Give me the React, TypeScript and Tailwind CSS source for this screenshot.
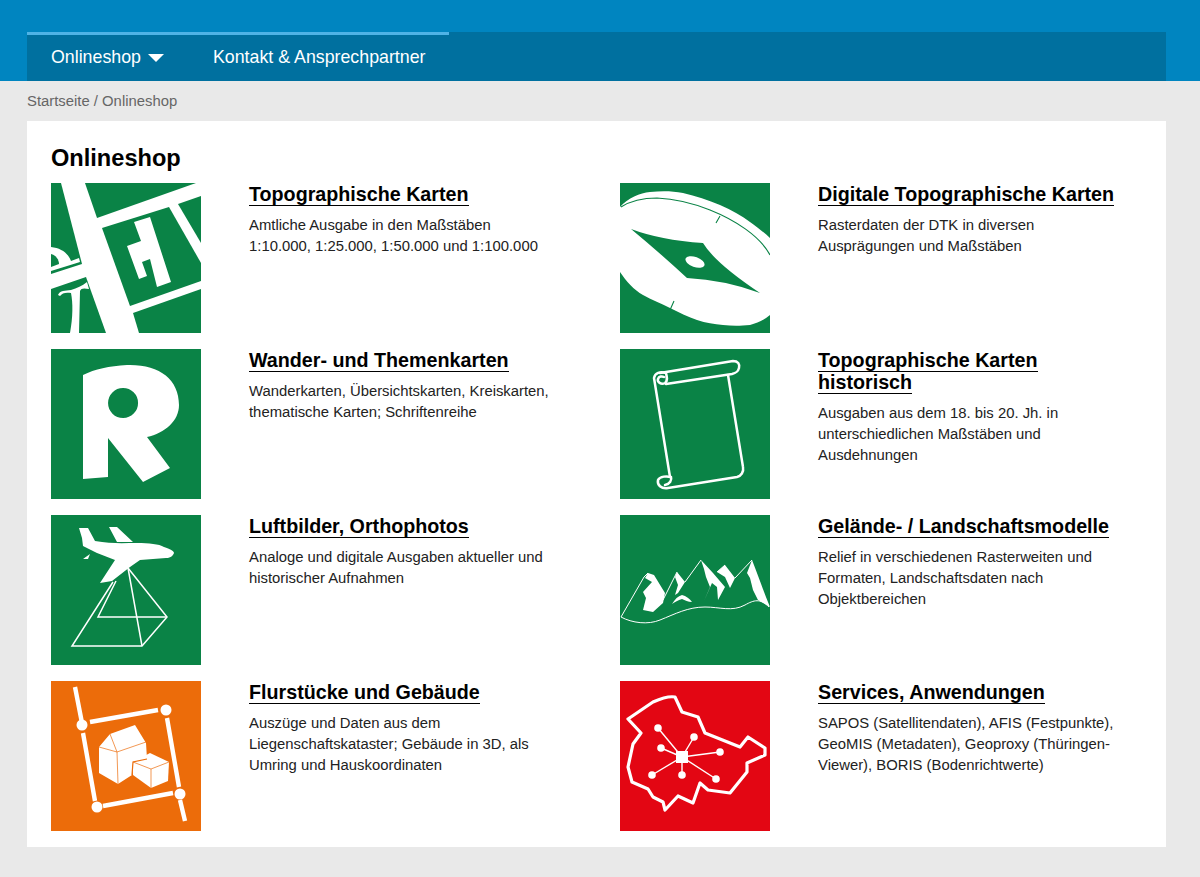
import React from "react";

const G = "#0a8346";

function IconMap() {
  return (
    <svg viewBox="0 0 150 150" className="block h-[150px] w-[150px] bg-white">
      <g fill={G}>
        <polygon points="34,0 145,0 46,35" />
        <polygon points="51,45 118,24 150,80 150,98 79,123" />
        <polygon points="127,21 150,13 150,60" />
        <polygon points="82,130 150,106 150,150 88,150" />
        <polygon points="0,106 35,94 55,150 0,150" />
        <polygon points="0,0 10,0 31,81 0,91" />
      </g>
      <polygon fill="#fff" points="83,39 99,34 120,99 106,104 99,76 91,79 96,93 88,96 76,63 90,58" />
      <path fill="#fff" d="M0 64 C10 65 17 70 20 78 L28 75 L29 79 L0 88 Z" />
      <path fill={G} d="M0 71 C5 72 8 77 8 81 L0 84 Z" />
      <path fill="#fff" d="M7 112 C9 107 14 108 20 107 C26 105 31 103 36 99 L38 106 C33 105 30 105 29 108 L28 150 L19 150 C22 134 22 120 20 110 C15 109 11 110 9 113 Z" />
    </svg>
  );
}

function IconR() {
  return (
    <svg viewBox="0 0 150 150" className="block h-[150px] w-[150px]">
      <rect width="150" height="150" fill={G} />
      <path fillRule="evenodd" fill="#fff" d="M32 26 C44 20 58 17 76 16 C108 15 128 30 128 56 C128 72 114 84 96 88 L119 119 L92 133 L57 89 L57 128 L32 130 Z M72 39 A15 15 0 1 0 72.1 69 A15 15 0 1 0 72 39 Z" />
    </svg>
  );
}

function IconPlane() {
  return (
    <svg viewBox="0 0 150 150" className="block h-[150px] w-[150px]">
      <rect width="150" height="150" fill={G} />
      <path fill="#fff" d="M28 13 L37 13 L44 26 C60 29 74 28 86 28 C98 28 108 29 113 32 C119 34 123 36 123 38 C122 41 119 43 115 43 L89 45 L79 52 L61 66 L49 68 L64 45 L46 38 L32 31 L31 23 Z" />
      <path fill="#fff" d="M58 12 L66 12 L82 27 L66 27 Z M32 44 L39 39 L37 44 Z" />
      <g fill="none" stroke="#fff" strokeWidth="1.5">
        <path d="M77 53 L116 102 L91 131 L21 131 L62 67" />
        <path d="M77 53 L91 131 M65 66 L47 102 L116 102" />
      </g>
    </svg>
  );
}

function IconHouse() {
  return (
    <svg viewBox="0 0 150 150" className="block h-[150px] w-[150px]">
      <rect width="150" height="150" fill="#ec6c0a" />
      <g stroke="#fff" strokeWidth="4.4" fill="none">
        <path d="M24 6 L31 42 M32 52 L44 120 M52 125 L122 112 M129 119 L134 140 M128 106 L116 37 M107 29 L39 41" />
      </g>
      <g fill="#fff">
        <circle cx="31" cy="44" r="5.5" />
        <circle cx="46" cy="126" r="5.5" />
        <circle cx="129" cy="113" r="5.5" />
        <circle cx="115" cy="29" r="5.5" />
        <path d="M48 66 L59 53 L84 44 L95 62 L96 78 L82 82 L81 94 L67 103 L48 92 Z" />
        <path d="M82 81 L99 72 L118 81 L117 100 L100 107 L82 94 Z" />
      </g>
      <g fill="none" stroke="#ec6c0a" strokeWidth="0.7">
        <path d="M48 66 L66 71 L95 61 M59 53 L66 71 L67 103" />
        <path d="M82 81 L100 88 L118 81 M100 88 L100 107" />
        <path d="M96 78 L82 81 L81 94" strokeWidth="1.2" />
      </g>
    </svg>
  );
}

function IconCompass() {
  return (
    <svg viewBox="0 0 150 150" className="block h-[150px] w-[150px]">
      <rect width="150" height="150" fill={G} />
      <path fill="#fff" d="M0 24 C8 15 20 10 30 9 C42 8 52 8 63 10 C76 13 88 17 100 22 C112 27 122 33 130 39 C138 45 145 50 150 55 L150 132 C144 137 138 140 130 142 C120 143 112 143 103 142 C94 141 86 140 77 137 C68 134 60 130 50 125 C40 120 32 117 23 112 C14 107 6 98 0 89 Z" />
      <path fill="none" stroke={G} strokeWidth="1.1" d="M1 24 C12 17 26 15 37 15 C58 16 75 21 90 27 C115 37 140 53 150 72 M100 33 L96 40 M54 118 L50 127" />
      <path fill={G} d="M11 46 Q40 57 83 60 Q95 80 140 110 Q105 97 67 95 Q40 70 11 46 Z" />
      <ellipse cx="75" cy="79" rx="10" ry="5" transform="rotate(20 75 79)" fill="#fff" />
    </svg>
  );
}

function IconScroll() {
  return (
    <svg viewBox="0 0 150 150" className="block h-[150px] w-[150px]">
      <rect width="150" height="150" fill={G} />
      <g fill="none" stroke="#fff" strokeWidth="2.5" strokeLinecap="round" strokeLinejoin="round">
        <path d="M40 24 L113 12 C118 12 120 15 119 19 C118 23 116 24 112 25 L46 35" />
        <path d="M46 24 C47 28 48 32 45 34 C41 36 37 33 38 30 C39 27 42 27 44 28 M46 24 C40 22 35 24 34 29 L50 128" />
        <path d="M108 26 L123 118 C124 123 121 127 117 128 L48 139 C41 140 37 136 38 131 C40 127 47 127 51 128 C52 131 50 135 45 136" />
      </g>
    </svg>
  );
}

function IconMountain() {
  return (
    <svg viewBox="0 0 150 150" className="block h-[150px] w-[150px]">
      <rect width="150" height="150" fill={G} />
      <g fill="none" stroke="#fff" strokeWidth="1">
        <path d="M1 102 C12 108 28 110 40 105 C55 99 68 92 85 92 C100 92 112 97 125 90 C134 85 140 83 149 92" />
        <path d="M1 102 L24 62 L28 58 M43 85 L57 57 M65 67 L81 45 M97 57 L105 50 M115 63 L132 45" />
      </g>
      <g fill="#fff">
        <path d="M28 58 L34 60 L45 78 L43 88 L33 97 L23 95 L26 83 L23 77 L32 67 L25 63 Z" />
        <path d="M57 57 L65 67 L58 78 L55 80 L58 70 L55 62 Z" />
        <path d="M52 89 C55 84 58 81 62 80 C66 81 70 84 72 87 C68 87 65 85 62 84 C58 85 55 87 52 89 Z" />
        <path d="M81 45 L93 58 L105 72 L98 85 L97 72 L92 68 L84 86 L90 72 L86 62 L84 54 Z" />
        <path d="M105 50 L115 63 L110 73 L105 62 L97 57 Z" />
        <path d="M132 45 C138 60 144 78 150 92 L138 85 L133 75 L130 63 L127 58 Z" />
      </g>
    </svg>
  );
}

function IconThuringia() {
  const spokes: [number, number][] = [
    [38, 47],
    [74, 56],
    [41, 67],
    [100, 71],
    [32, 94],
    [62, 94],
    [96, 98],
  ];
  return (
    <svg viewBox="0 0 150 150" className="block h-[150px] w-[150px]">
      <rect width="150" height="150" fill="#e30613" />
      <path
        fill="none"
        stroke="#fff"
        strokeWidth="3.2"
        strokeLinejoin="round"
        d="M8 38 L33 21 C42 17 50 15 55 16 L62 31 L78 36 L85 52 L120 66 L128 56 L145 67 L145 74 L127 82 L127 91 L110 112 L88 109 L80 102 L73 122 L58 115 L45 129 L43 121 L33 116 L28 108 L12 101 L8 86 L13 63 L21 52 Z"
      />
      <g stroke="#fff" strokeWidth="1.4">
        {spokes.map(([x, y], i) => (
          <line key={i} x1="62" y1="76" x2={x} y2={y} />
        ))}
      </g>
      <g fill="#fff">
        {spokes.map(([x, y], i) => (
          <circle key={i} cx={x} cy={y} r="3.8" />
        ))}
      </g>
      <rect x="56" y="70" width="12" height="12" fill="#fff" />
    </svg>
  );
}

type Item = { icon: React.ReactNode; title: React.ReactNode; lines: string[] };

const items: Item[] = [
  { icon: <IconMap />, title: "Topographische Karten", lines: ["Amtliche Ausgabe in den Maßstäben", "1:10.000, 1:25.000, 1:50.000 und 1:100.000"] },
  { icon: <IconCompass />, title: "Digitale Topographische Karten", lines: ["Rasterdaten der DTK in diversen", "Ausprägungen und Maßstäben"] },
  { icon: <IconR />, title: "Wander- und Themenkarten", lines: ["Wanderkarten, Übersichtskarten, Kreiskarten,", "thematische Karten; Schriftenreihe"] },
  { icon: <IconScroll />, title: <>Topographische Karten<br />historisch</>, lines: ["Ausgaben aus dem 18. bis 20. Jh. in", "unterschiedlichen Maßstäben und", "Ausdehnungen"] },
  { icon: <IconPlane />, title: "Luftbilder, Orthophotos", lines: ["Analoge und digitale Ausgaben aktueller und", "historischer Aufnahmen"] },
  { icon: <IconMountain />, title: "Gelände- / Landschaftsmodelle", lines: ["Relief in verschiedenen Rasterweiten und", "Formaten, Landschaftsdaten nach", "Objektbereichen"] },
  { icon: <IconHouse />, title: "Flurstücke und Gebäude", lines: ["Auszüge und Daten aus dem", "Liegenschaftskataster; Gebäude in 3D, als", "Umring und Hauskoordinaten"] },
  { icon: <IconThuringia />, title: "Services, Anwendungen", lines: ["SAPOS (Satellitendaten), AFIS (Festpunkte),", "GeoMIS (Metadaten), Geoproxy (Thüringen-", "Viewer), BORIS (Bodenrichtwerte)"] },
];

export default function App() {
  return (
    <div className="min-h-[877px] bg-[#e9e9e9] font-['Liberation_Sans',Arial,sans-serif]">
      <header className="h-[81px] bg-[#0085c0] px-[27px] pt-[32px]">
        <nav className="h-[49px] w-[1139px] bg-[#00709f]">
          <ul className="flex h-full w-[422px] items-center border-t-[3px] border-[#4fb3e6] pb-[2px] text-[17.8px] text-white">
            <li className="flex items-center gap-[7px] pl-6">
              <span>Onlineshop</span>
              <svg width="16" height="8" viewBox="0 0 16 8" className="mt-[2px] block">
                <polygon points="0,0 16,0 8,8" fill="#fff" />
              </svg>
            </li>
            <li className="pl-[49px]">Kontakt &amp; Ansprechpartner</li>
          </ul>
        </nav>
      </header>
      <div className="flex h-[40px] items-center px-[27px] text-[14.85px] text-[#666]">Startseite / Onlineshop</div>
      <main className="ml-[27px] h-[726px] w-[1139px] bg-white px-6 pt-6">
        <h1 className="text-[23.6px] leading-[27px] font-bold text-black">Onlineshop</h1>
        <div className="mt-[11px] grid grid-cols-[569px_1fr] gap-y-4">
          {items.map((it, i) => (
            <div key={i} className="flex h-[150px] gap-12">
              <div className="h-[150px] w-[150px] shrink-0">{it.icon}</div>
              <div>
                <h2 className="text-[19.7px] leading-[22px] font-bold text-black">
                  <span className="border-b border-black">{it.title}</span>
                </h2>
                <p className="mt-[10px] text-[14.85px] leading-[21px] text-[#222]">
                  {it.lines.map((l, j) => (
                    <span key={j} className="block">{l}</span>
                  ))}
                </p>
              </div>
            </div>
          ))}
        </div>
      </main>
    </div>
  );
}
